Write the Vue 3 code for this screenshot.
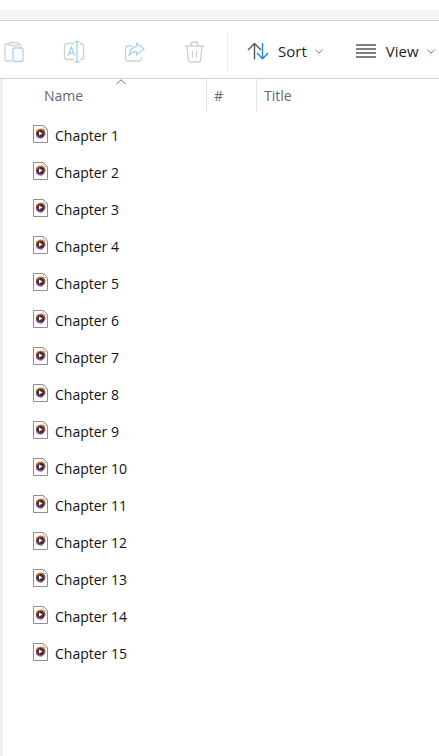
<script setup>
const rows = Array.from({ length: 15 }, (_, i) => `Chapter ${i + 1}`)
</script>

<template>
  <div class="page">
    <div class="top-white"></div>
    <div class="top-band"></div>
    <div class="toolbar">
      <div class="actions">
        <svg class="act" width="24" height="24" viewBox="0 0 24 24" fill="none">
          <path d="M10 21H5a2 2 0 0 1-2-2V6a2 2 0 0 1 2-2h2M16 4h0.500a2 2 0 0 1 2 2v2" stroke="#cfcfcf" stroke-width="1.300"/>
          <rect x="7" y="2.500" width="9" height="3" rx="1.500" stroke="#cfcfcf" stroke-width="1.300"/>
          <rect x="11" y="8" width="10" height="13.500" rx="2" stroke="#a9d3f2" stroke-width="1.300"/>
        </svg>
        <svg class="act" width="24" height="24" viewBox="0 0 24 24" fill="none">
          <path d="M12 3.500H5A2.500 2.500 0 0 0 2.500 6v11A2.500 2.500 0 0 0 5 19.500h7M18 3.500h1A2.500 2.500 0 0 1 21.500 6v11a2.500 2.500 0 0 1-2.500 2.500h-1" stroke="#cfcfcf" stroke-width="1.300"/>
          <path d="M12.500 1.500h5M12.500 22h5M15 1.500V22" stroke="#a9d3f2" stroke-width="1.300"/>
          <path d="M6 15.500l3.300-8.500 3.300 8.500M7.200 13h4.300" stroke="#a9d3f2" stroke-width="1.300"/>
        </svg>
        <svg class="act" width="24" height="24" viewBox="0 0 24 24" fill="none">
          <path d="M10 6H6a2.500 2.500 0 0 0-2.500 2.500v10A2.500 2.500 0 0 0 6 21h11a2.500 2.500 0 0 0 2.500-2.500V17" stroke="#cfcfcf" stroke-width="1.300"/>
          <path d="M14.500 3l7.500 6-7.500 6v-3.500c-3.500 0-5.500 1.300-7.500 4 .5-5 3-8.500 7.500-9z" stroke="#a9d3f2" stroke-width="1.300" stroke-linejoin="round"/>
        </svg>
        <svg class="act" width="24" height="24" viewBox="0 0 24 24" fill="none" stroke="#cfcfcf" stroke-width="1.300">
          <path d="M3 6h19M5 6l1.300 14.200a2 2 0 0 0 2 1.800h8.400a2 2 0 0 0 2-1.800L20 6M9 6V4.500A2.500 2.500 0 0 1 11.500 2h2A2.500 2.500 0 0 1 16 4.500V6M10.500 10.500v7M14.500 10.500v7"/>
        </svg>
      </div>
      <div class="divider"></div>
      <div class="menu sort">
        <svg width="22" height="18" viewBox="0 0 22 18" fill="none" stroke-width="1.400">
          <path d="M1 8l6.500-6.500L14 8M7.500 1.500V17.500" stroke="#555"/>
          <path d="M10 11l5.500 5.800L21 11M15.500 16.500V1" stroke="#1a86d9"/>
        </svg>
        <span class="label">Sort</span>
        <svg class="chev" width="8" height="5" viewBox="0 0 8 5" fill="none"><path d="M.5.800 4 4.200 7.500.800" stroke="#777"/></svg>
      </div>
      <div class="menu view">
        <svg width="20" height="14" viewBox="0 0 20 14" fill="none" stroke="#555" stroke-width="1.400">
          <path d="M0 1h20M0 5h20M0 9h20M0 13h20"/>
        </svg>
        <span class="label">View</span>
        <svg class="chev" width="8" height="5" viewBox="0 0 8 5" fill="none"><path d="M.5.800 4 4.200 7.500.800" stroke="#777"/></svg>
      </div>
    </div>
    <div class="body">
      <div class="content">
        <div class="head">
          <div class="col name">
            <svg class="caret" width="10" height="6" viewBox="0 0 10 6" fill="none"><path d="M.5 5 5 .8 9.500 5" stroke="#777"/></svg>
            <span>Name</span>
          </div>
          <div class="col num"><span>#</span></div>
          <div class="col title"><span>Title</span></div>
        </div>
        <div class="list">
          <div v-for="r in rows" :key="r" class="row">
            <svg width="15" height="18" viewBox="0 0 15 18" fill="none">
              <path d="M.5.500h10l4 4v13H.5z" fill="#fff" stroke="#8f8f8f"/>
              <path d="M10.500 .5v4h4" stroke="#c4c4c4"/>
              <circle cx="7.500" cy="8.500" r="4.500" fill="#3d3338"/>
              <path d="M3.200 7.500A4.500 4.500 0 0 1 11 5.800" stroke="#d9702a" stroke-width="1.300"/>
              <path d="M11 5.800A4.500 4.500 0 0 1 11.600 10" stroke="#c24a2a" stroke-width="1.300"/>
              <path d="M3.200 9.500A4.500 4.500 0 0 0 10 12.300" stroke="#a55ab8" stroke-width="1.300"/>
              <path d="M6 6.400v4.200l3.500-2.100z" fill="#fff"/>
            </svg>
            <span>{{ r }}</span>
          </div>
        </div>
      </div>
    </div>
  </div>
</template>

<style>
html, body { margin: 0; background: #fff; }
</style>

<style scoped>
.page { width: 439px; height: 756px; overflow: hidden; display: flex; flex-direction: column; font-family: "Open Sans", "Noto Sans", sans-serif; background: #fff; }
.top-white { height: 10px; }
.top-band { height: 10px; background: #f5f5f5; }
.toolbar { height: 57px; flex: none; border-top: 1px solid #cfcfcf; border-bottom: 1px solid #cfcfcf; display: flex; align-items: center; white-space: nowrap; }
.actions { display: flex; align-items: center; gap: 36px; padding-left: 2px; width: 227px; box-sizing: border-box; margin-top: 4px; }
.act { flex: none; }
.divider { width: 1px; height: 40px; background: #ececec; margin-top: 4px; }
.menu { display: flex; align-items: center; color: #1f1f1f; font-size: 15px; margin-top: 3px; }
.sort { margin-left: 19px; }
.view { margin-left: 33px; }
.label { margin-left: 9px; }
.chev { margin-left: 8px; margin-top: 1px; }
.menu.view .label { margin-left: 10px; }
.body { flex: 1; display: flex; }
.content { flex: 1; border-left: 3px solid #f0f0f0; }
.head { display: flex; height: 33px; color: #5a6b80; font-size: 14px; }
.col { position: relative; display: flex; align-items: center; border-right: 1px solid #e6e6e6; box-sizing: border-box; }
.name { width: 204px; padding-left: 41px; }
.num { width: 50px; padding-left: 7px; }
.title { flex: 1; padding-left: 7px; border-right: 0; }
.caret { position: absolute; left: 113px; top: 0; }
.list { padding: 5px 0 0 30px; }
.row { height: 37px; display: flex; align-items: center; gap: 7px; font-size: 14px; color: #111; }
.row svg { margin-top: -3px; }
</style>
